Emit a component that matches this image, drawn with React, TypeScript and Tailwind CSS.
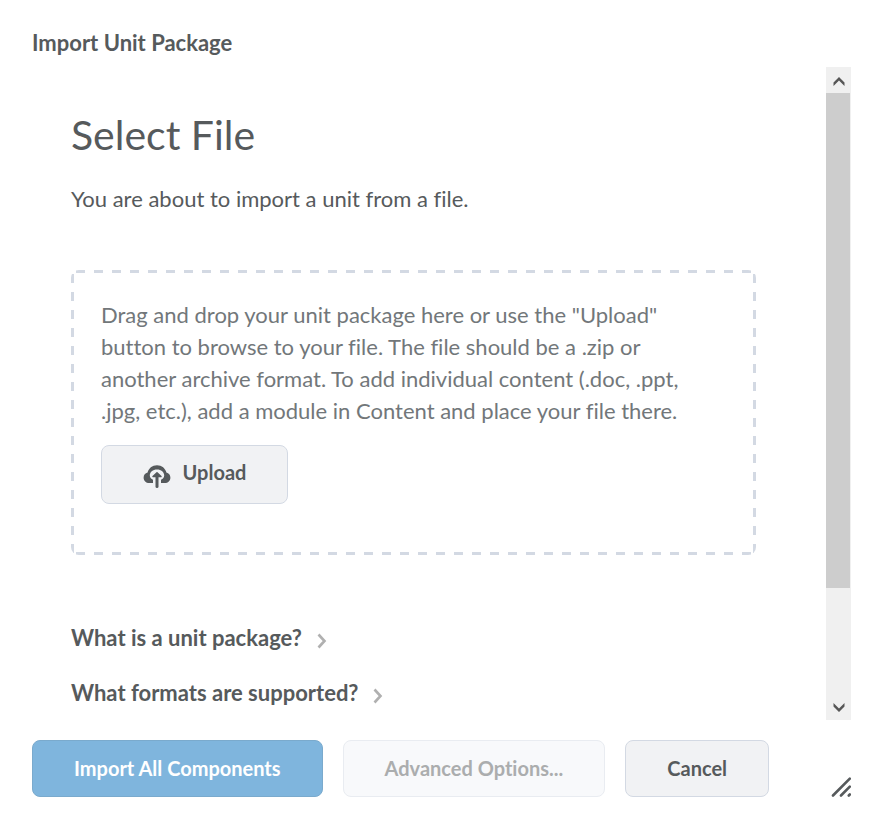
import type { ReactNode } from "react";

function UploadIcon() {
  return (
    <svg viewBox="0 0 28 24" className="mt-[2px] h-6 w-7" aria-hidden="true">
      <path
        fill="#565a5c"
        d="M10 19H6.200C3 19 .600 16.700.600 13.700c0-2.500 1.600-4.500 4-5.100C5.600 4.400 9.200 1.200 14 1.200s8.400 3.200 9.400 7.400c2.400.600 4 2.600 4 5.100 0 3-2.400 5.300-5.600 5.300H18v-3.200c2-1 3.200-2.400 3.200-4.300 0-3.400-3-6-7.200-6s-7.200 2.600-7.200 6c0 1.900 1.200 3.300 3.200 4.300Z"
      />
      <path d="M14 22.500V12" stroke="#565a5c" strokeWidth="3" strokeLinecap="round" />
      <path d="M14 8.800 18 12.600H10Z" fill="#565a5c" stroke="#565a5c" strokeWidth="1.500" strokeLinejoin="round" />
    </svg>
  );
}

function DashedOutline() {
  return (
    <svg className="pointer-events-none absolute inset-0 h-full w-full" stroke="#d3d9e3" strokeWidth="6" strokeDasharray="9 9" aria-hidden="true">
      <line x1="5" y1="0" x2="100%" y2="0" />
      <line x1="5" y1="100%" x2="100%" y2="100%" />
      <line x1="0" y1="4" x2="0" y2="100%" />
      <line x1="100%" y1="4" x2="100%" y2="100%" />
    </svg>
  );
}

function ResizeGrip() {
  return (
    <svg viewBox="0 0 20 20" className="h-5 w-5" stroke="#565a5c" strokeWidth="2.600" strokeLinecap="round" aria-hidden="true">
      <path d="M2 18.500 18.800 1.700M10 18.500l8.800-8.800M17.800 18.500l1-1" />
    </svg>
  );
}

function ScrollArrow({ label, d }: { label: string; d: string }) {
  return (
    <button type="button" aria-label={label} className="flex h-[26px] w-full shrink-0 items-center justify-center pt-[2px]">
      <svg viewBox="0 0 12 10" className="h-[10px] w-3" fill="#565656" aria-hidden="true">
        <path d={d} />
      </svg>
    </button>
  );
}

function Question({ children }: { children: ReactNode }) {
  return (
    <button type="button" className="flex items-center gap-[15px] text-[22px] leading-8 font-bold">
      <span>{children}</span>
      <svg viewBox="0 0 10 16" className="mt-[6px] h-4 w-[10px]" fill="none" stroke="#b0b0b0" strokeWidth="2.600" aria-hidden="true">
        <path d="M1.500 1.500 7.500 8l-6 6.500" />
      </svg>
    </button>
  );
}

export default function App() {
  return (
    <div className="flex min-h-screen flex-col bg-white pt-[27px] pr-[29px] pb-[35px] pl-8 font-['Lato',sans-serif] text-[#565a5c] [font-variant-ligatures:none]">
      <h1 className="text-[22px] leading-8 font-bold">Import Unit Package</h1>

      <div className="mt-2 flex flex-1">
        <main className="min-w-0 flex-1 pt-[43px] pr-[70px] pl-[39px]">
          <h2 className="text-[41px] leading-[50px]">Select File</h2>
          <p className="mt-[23px] text-[22px] leading-8">You are about to import a unit from a file.</p>

          <section className="relative mt-[55px] overflow-hidden rounded-lg pt-[29px] pr-[55px] pb-[51px] pl-[30px]">
            <DashedOutline />
            <p className="text-[22px] leading-8 text-[#72777a]">
              Drag and drop your unit package here or use the "Upload" button to browse to your file. The file should be a .zip or another archive format. To add individual content (.doc, .ppt, .jpg, etc.), add a module in Content and place your file there.
            </p>
            <button type="button" className="mt-[18px] flex h-[59px] w-[187px] items-center justify-center gap-3 rounded-lg border border-[#d3d9e3] bg-[#f1f2f4] text-[20px] font-bold">
              <UploadIcon />
              <span className="pb-[6px]">Upload</span>
            </button>
          </section>

          <div className="mt-[67px] flex flex-col items-start gap-[23px]">
            <Question>What is a unit package?</Question>
            <Question>What formats are supported?</Question>
          </div>
        </main>

        <div className="flex w-[25px] shrink-0 flex-col bg-[#f0f0f0]">
          <ScrollArrow label="Scroll up" d="M6 1l5.500 5.500V10L6 4.500.5 10V6.500Z" />
          <div className="flex flex-1 flex-col pr-px">
            <div className="flex-[14] bg-[#cdcdcd]" />
            <div className="flex-[3]" />
          </div>
          <ScrollArrow label="Scroll down" d="M6 9l5.500-5.500V0L6 5.500.5 0V3.500Z" />
        </div>
      </div>

      <footer className="mt-5 flex items-end justify-between">
        <div className="flex gap-5 text-[20px] font-bold">
          <button type="button" className="h-[57px] rounded-lg border border-[#7aaacd] bg-[#7fb5dd] px-[41px] pb-[2px] text-white">
            Import All Components
          </button>
          <button type="button" disabled className="h-[57px] rounded-lg border border-[#e9ecf1] bg-[#f8f9fb] px-[41px] pb-[2px] text-[#abadae]">
            Advanced Options...
          </button>
          <button type="button" className="h-[57px] rounded-lg border border-[#d3d9e3] bg-[#f1f2f4] px-[41px] pb-[2px]">
            Cancel
          </button>
        </div>
        <ResizeGrip />
      </footer>
    </div>
  );
}
